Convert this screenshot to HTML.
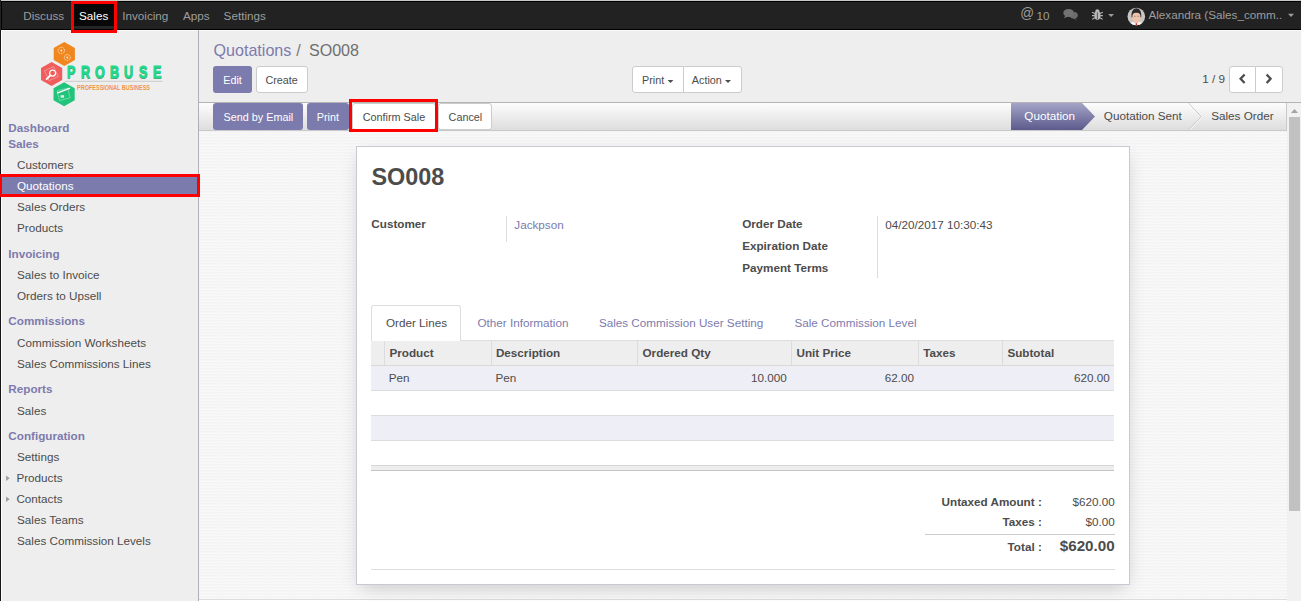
<!DOCTYPE html>
<html><head><meta charset="utf-8">
<style>
*{box-sizing:border-box}
html,body{margin:0;padding:0}
body{width:1301px;height:601px;overflow:hidden;position:relative;background:#efeded;font-family:"Liberation Sans",sans-serif;color:#4c4c4c}
.a{position:absolute}
.t{position:absolute;white-space:nowrap;line-height:1}
.btnp{position:absolute;background:#7c7bad;border-radius:3px}
.btnw{position:absolute;background:#fff;border:1px solid #ccc;border-radius:3px}
.red{position:absolute;border:3px solid #ff0000}
.tex{background:repeating-conic-gradient(#f1f1f1 0 25%,#fbfbfb 0 50%) 0 0/3px 3px}
</style></head><body>
<!-- top edge row -->
<div class="a" style="left:0;top:0;width:1301px;height:1px;background:#c8c8c8"></div>
<!-- navbar -->
<div class="a" style="left:0;top:1px;width:1301px;height:29px;background:#222;border-top:1px solid #000;border-bottom:1px solid #000"></div>
<div class="a" style="left:0;top:30px;width:1301px;height:1px;background:#fafafa"></div>
<div class="a" style="left:72px;top:2px;width:44px;height:26px;background:#080808"></div>
<div class="a" style="left:74px;top:26px;width:40px;height:2px;background:#262626"></div>
<!-- sidebar -->
<div class="a" style="left:0;top:31px;width:198px;height:570px;background:#efeeee"></div>
<div class="a" style="left:198px;top:30px;width:1px;height:571px;background:#b0afb8"></div>
<div class="a" style="left:0;top:175px;width:198px;height:21px;background:#7c7bad"></div>
<!-- control panel -->
<div class="a" style="left:199px;top:31px;width:1102px;height:71px;background:#efeeee"></div>
<div class="a" style="left:199px;top:102px;width:1102px;height:1px;background:#b4b4b4"></div>
<!-- content -->
<svg class="a" style="left:199px;top:103px" width="1088" height="496" shape-rendering="crispEdges"><defs><pattern id="ptex" x="0" y="0" width="3" height="3" patternUnits="userSpaceOnUse"><rect width="3" height="3" fill="#f6f6f6"/><rect x="1" y="0" width="1" height="1" fill="#fdfdfd"/><rect x="1" y="1" width="1" height="1" fill="#efefef"/></pattern></defs><rect width="1088" height="496" fill="url(#ptex)"/></svg>
<div class="a" style="left:199px;top:599px;width:1088px;height:1px;background:#dcdcdc"></div>
<div class="a" style="left:199px;top:600px;width:1088px;height:1px;background:#fff"></div>
<!-- scrollbar -->
<div class="a" style="left:1287px;top:103px;width:14px;height:498px;background:#f1f1f1"></div>
<svg class="a" style="left:1287px;top:103px" width="14" height="14"><path d="M4 10 L7.5 6 L11 10 Z" fill="#a3a3a3"/></svg>
<div class="a" style="left:1289px;top:117px;width:11px;height:394px;background:#c1c1c1"></div>
<!-- statusbar -->
<div class="a" style="left:199px;top:103px;width:1088px;height:28px;background:linear-gradient(#fdfdfd,#dddddd);border-bottom:1px solid #c9c9c9;border-right:1px solid #c9c9c9"></div>
<!-- left dark edge -->
<div class="a" style="left:0;top:0;width:1px;height:601px;background:#151515"></div>
<div class="a" style="left:1px;top:31px;width:1px;height:570px;background:#fbfbfb"></div>
<div class="a" style="left:1px;top:1px;width:1px;height:29px;background:#000"></div>
<div class="a" style="left:0;top:0;width:1px;height:30px;background:#232323"></div>

<!-- control panel buttons -->
<div class="btnp" style="left:213px;top:66px;width:39px;height:27px"></div>
<div class="btnw" style="left:256px;top:66px;width:52px;height:27px"></div>
<div class="btnw" style="left:632px;top:66px;width:52px;height:27px;border-radius:3px 0 0 3px"></div>
<div class="btnw" style="left:683px;top:66px;width:59px;height:27px;border-radius:0 3px 3px 0"></div>
<svg class="a" style="left:660px;top:75px" width="80" height="12">
 <path d="M7.6 5 L13.4 5 L10.5 8 Z" fill="#4c4c4c"/>
 <path d="M65 5 L71 5 L68 8 Z" fill="#4c4c4c"/>
</svg>
<div class="btnw" style="left:1229px;top:66px;width:27px;height:27px;border-radius:3px 0 0 3px"></div>
<div class="btnw" style="left:1255px;top:66px;width:28px;height:27px;border-radius:0 3px 3px 0"></div>
<svg class="a" style="left:1229px;top:66px" width="54" height="27">
 <path d="M15.6 8.5 L11.6 12.8 L15.6 17" fill="none" stroke="#4c4c4c" stroke-width="2.3"/>
 <path d="M37.6 8.5 L41.6 12.8 L37.6 17" fill="none" stroke="#4c4c4c" stroke-width="2.3"/>
</svg>

<!-- statusbar buttons -->
<div class="btnp" style="left:213px;top:103px;width:90px;height:27px"></div>
<div class="btnp" style="left:307px;top:103px;width:42px;height:27px"></div>
<div class="btnw" style="left:352px;top:103px;width:84px;height:27px"></div>
<div class="btnw" style="left:438px;top:103px;width:54px;height:27px"></div>
<!-- status arrows -->
<svg class="a" style="left:1000px;top:103px" width="287" height="27">
 <defs><linearGradient id="gq" x1="0" y1="0" x2="0" y2="1"><stop offset="0" stop-color="#a5a4c8"/><stop offset="1" stop-color="#5b5a8b"/></linearGradient></defs>
 <path d="M11 0 L82 0 L95 13.5 L82 27 L11 27 Z" fill="url(#gq)"/>
 <path d="M188.6 0 L201.3 13.5 L188.6 27" fill="none" stroke="#c8c8c8" stroke-width="1"/>
 <path d="M189.8 0 L202.5 13.5 L189.8 27" fill="none" stroke="#fafafa" stroke-width="1"/>
</svg>

<!-- sheet -->
<div class="a" style="left:356px;top:146px;width:774px;height:439px;background:#fff;border:1px solid #c9c9d6;box-shadow:0 6px 18px -5px rgba(0,0,0,0.22)"></div>
<div class="a" style="left:506px;top:216px;width:1px;height:26px;background:#dcdcdc"></div>
<div class="a" style="left:877px;top:216px;width:1px;height:62px;background:#dcdcdc"></div>
<!-- tabs -->
<div class="a" style="left:371px;top:340px;width:743px;height:1px;background:#dddddd"></div>
<div class="a" style="left:371px;top:305px;width:90px;height:36px;background:#fff;border:1px solid #dddddd;border-bottom:none;border-radius:3px 3px 0 0"></div>
<!-- table -->
<div class="a" style="left:371px;top:341px;width:743px;height:24px;background:#eeeeee"></div>
<div class="a" style="left:371px;top:365px;width:743px;height:1px;background:#d9d9d9"></div>
<div class="a" style="left:384px;top:341px;width:1px;height:24px;background:#dcdcdc"></div>
<div class="a" style="left:491px;top:341px;width:1px;height:24px;background:#dcdcdc"></div>
<div class="a" style="left:637px;top:341px;width:1px;height:24px;background:#dcdcdc"></div>
<div class="a" style="left:791px;top:341px;width:1px;height:24px;background:#dcdcdc"></div>
<div class="a" style="left:918px;top:341px;width:1px;height:24px;background:#dcdcdc"></div>
<div class="a" style="left:1002px;top:341px;width:1px;height:24px;background:#dcdcdc"></div>
<div class="a" style="left:371px;top:366px;width:743px;height:24px;background:#eeeef6"></div>
<div class="a" style="left:371px;top:390px;width:743px;height:1px;background:#dcdcdc"></div>
<div class="a" style="left:371px;top:415px;width:743px;height:1px;background:#dcdcdc"></div>
<div class="a" style="left:371px;top:416px;width:743px;height:24px;background:#eeeef6"></div>
<div class="a" style="left:371px;top:440px;width:743px;height:1px;background:#dcdcdc"></div>
<div class="a" style="left:371px;top:465px;width:743px;height:1px;background:#d5d5d5"></div>
<div class="a" style="left:371px;top:466px;width:743px;height:4px;background:#eeeeee"></div>
<div class="a" style="left:371px;top:470px;width:743px;height:1px;background:#c4c4c4"></div>
<!-- totals -->
<div class="a" style="left:925px;top:534px;width:190px;height:1px;background:#cccccc"></div>
<div class="a" style="left:371px;top:569px;width:744px;height:1px;background:#dddddd"></div>

<!-- logo -->
<svg class="a" style="left:30px;top:36px" width="140" height="76">
 <g transform="translate(34.3,18)"><path d="M0 -12 L10.6 -6 L10.6 6 L0 12 L-10.6 6 L-10.6 -6 Z" fill="#f0861d"/>
  <circle cx="-3" cy="-3.5" r="3.2" fill="none" stroke="#fff" stroke-width="1" stroke-dasharray="1.2 0.8" opacity="0.75"/>
  <circle cx="-3" cy="-3.5" r="1" fill="#fff" opacity="0.8"/>
  <circle cx="3" cy="3.5" r="3" fill="none" stroke="#fff" stroke-width="1" stroke-dasharray="1.2 0.8" opacity="0.75"/>
  <circle cx="3" cy="3.5" r="1" fill="#fff" opacity="0.8"/></g>
 <g transform="translate(21.6,38.1)"><path d="M0 -12 L10.6 -6 L10.6 6 L0 12 L-10.6 6 L-10.6 -6 Z" fill="#ef5d5d"/>
  <rect x="-5" y="-6" width="10" height="11" fill="none" stroke="#fff" stroke-width="0.6" opacity="0.5" transform="rotate(-25)"/>
  <circle cx="1" cy="-1" r="3" fill="none" stroke="#fff" stroke-width="1.2"/>
  <path d="M-1 1 L-5.5 5.5" stroke="#fff" stroke-width="1.8"/></g>
 <g transform="translate(34.1,58.2)"><path d="M0 -12 L10.6 -6 L10.6 6 L0 12 L-10.6 6 L-10.6 -6 Z" fill="#22c47a"/>
  <rect x="-6" y="-5" width="11" height="10" fill="none" stroke="#fff" stroke-width="0.6" opacity="0.5" transform="rotate(-15)"/>
  <path d="M-7 -1 L6 -6" stroke="#fff" stroke-width="1.3"/>
  <rect x="-3.5" y="1" width="3.5" height="2.5" fill="#fff" opacity="0.8"/></g>
  <path d="M35 45.3 L132.5 45.3" stroke="#cbcbcb" stroke-width="1"/>
 <text x="47" y="54" font-family="Liberation Sans" font-size="6.6" font-weight="bold" fill="#f2963e" textLength="73" lengthAdjust="spacingAndGlyphs">PROFESSIONAL BUSINESS</text>
</svg>
<div class="a" style="left:67px;top:64px;width:100px;height:18px;font-family:'Liberation Sans';font-weight:bold;font-size:16.6px;line-height:18px;color:#20da88;-webkit-text-stroke:0.9px #22d98a;text-shadow:0 1.2px 0 rgba(40,70,55,0.7)">
 <span class="a" style="left:0px;top:0;transform:scaleX(0.76);transform-origin:0 0">P</span>
 <span class="a" style="left:13.5px;top:0;transform:scaleX(0.76);transform-origin:0 0">R</span>
 <span class="a" style="left:27.5px;top:0;transform:scaleX(0.76);transform-origin:0 0">O</span>
 <span class="a" style="left:42.5px;top:0;transform:scaleX(0.76);transform-origin:0 0">B</span>
 <span class="a" style="left:56.5px;top:0;transform:scaleX(0.76);transform-origin:0 0">U</span>
 <span class="a" style="left:71.5px;top:0;transform:scaleX(0.76);transform-origin:0 0">S</span>
 <span class="a" style="left:85.5px;top:0;transform:scaleX(0.76);transform-origin:0 0">E</span>
</div>

<!-- navbar icons -->
<div class="t" style="left:1020.3px;top:7.0px;font-size:13.6px;color:#9d9d9d;transform:scaleY(1.13);transform-origin:50% 90%">@</div>
<svg class="a" style="left:1058px;top:4px" width="60" height="20">
 <ellipse cx="15.7" cy="11.3" rx="4.1" ry="3.3" fill="#6c6c6c"/>
 <path d="M16.5 13.5 L18.8 16 L14.5 14.2 Z" fill="#6c6c6c"/>
 <ellipse cx="10.6" cy="8.9" rx="5.3" ry="4.0" fill="#727272"/>
 <path d="M7.2 11.8 L5.9 14.3 L10.2 12.6 Z" fill="#727272"/>
 <ellipse cx="39.4" cy="6.9" rx="2.1" ry="1.6" fill="#b8b8b8"/>
 <ellipse cx="39.4" cy="11.5" rx="3.1" ry="4.4" fill="#b8b8b8"/>
 <path d="M34 8.3 L36.8 9.6 M44.8 8.3 L42 9.6 M34 11.6 L36.6 11.6 M44.8 11.6 L42.2 11.6 M34.2 15.4 L36.8 13.8 M44.6 15.4 L42 13.8" stroke="#b8b8b8" stroke-width="1.1"/>
 <path d="M39.4 8.4 L39.4 15.4" stroke="#4a4a5a" stroke-width="0.9"/>
 <path d="M50.2 10 L56 10 L53.1 13.1 Z" fill="#9d9d9d"/>
</svg>

<svg class="a" style="left:1126px;top:6px" width="22" height="22">
 <defs><clipPath id="cav"><circle cx="10.3" cy="10.5" r="8.7"/></clipPath></defs>
 <circle cx="10.3" cy="10.5" r="8.8" fill="#cbc6c1"/>
 <g clip-path="url(#cav)">
  <path d="M1.5 22 C2.5 17 5.5 15.8 10.4 15.8 C15.3 15.8 18.3 17 19.3 22 Z" fill="#f4f4f4"/>
  <path d="M7.5 15.6 L10.4 18.2 L13.3 15.6 Z" fill="#e8c0a8"/>
  <path d="M9.8 17.2 L11 17.2 L11.2 20 L9.6 20 Z" fill="#d42a2a"/>
  <ellipse cx="10.4" cy="11.2" rx="4.1" ry="5.2" fill="#eec3ab"/>
  <path d="M5.6 11.5 C5 5 7.5 2.2 10.4 2.2 C13.3 2.2 15.8 5 15.2 11.5 L14.5 11.2 C14.6 8.2 13.6 6.6 10.4 6.8 C7.2 6.6 6.2 8.2 6.3 11.2 Z" fill="#2a2a2a"/>
  <path d="M8.2 10.3 L9.4 10.3 M11.4 10.3 L12.6 10.3" stroke="#6b5040" stroke-width="0.7"/>
 </g>
</svg>
<svg class="a" style="left:1286px;top:10px" width="12" height="10"><path d="M2 3.8 L8 3.8 L5 7 Z" fill="#9d9d9d"/></svg>

<svg class="a" style="left:4px;top:472px" width="8" height="34"><path d="M2.1 3.4 L5.6 6.2 L2.1 9 Z" fill="#9a9a9a"/><path d="M2.1 24.4 L5.6 27.2 L2.1 30 Z" fill="#9a9a9a"/></svg>
<div class="t" id="n_discuss" style="left:23.20px;top:10.06px;font-size:11.7px;color:#9d9d9d;font-weight:normal;">Discuss</div>
<div class="t" id="n_sales" style="left:79.00px;top:10.06px;font-size:11.7px;color:#fff;font-weight:normal;">Sales</div>
<div class="t" id="n_inv" style="left:122.20px;top:10.06px;font-size:11.7px;color:#9d9d9d;font-weight:normal;">Invoicing</div>
<div class="t" id="n_apps" style="left:183.00px;top:10.06px;font-size:11.7px;color:#9d9d9d;font-weight:normal;">Apps</div>
<div class="t" id="n_settings" style="left:223.60px;top:10.06px;font-size:11.7px;color:#9d9d9d;font-weight:normal;">Settings</div>
<div class="t" id="n_10" style="left:1036.40px;top:10.36px;font-size:11.7px;color:#9d9d9d;font-weight:normal;">10</div>
<div class="t" id="n_user" style="left:1148.40px;top:8.66px;font-size:11.7px;color:#9d9d9d;font-weight:normal;">Alexandra (Sales_comm..</div>
<div class="t" id="bc_q" style="left:213.50px;top:42.21px;font-size:16.1px;color:#7c7bad;font-weight:normal;">Quotations</div>
<div class="t" id="bc_sl" style="left:296.20px;top:42.21px;font-size:16.1px;color:#777;font-weight:normal;">/</div>
<div class="t" id="bc_so" style="left:308.90px;top:42.21px;font-size:16.1px;color:#6e6e6e;font-weight:normal;">SO008</div>
<div class="t" id="pager" style="left:1202.20px;top:73.06px;font-size:11.7px;color:#4c4c4c;font-weight:normal;">1 / 9</div>
<div class="t" id="s0" style="left:8.30px;top:122.25px;font-size:11.7px;color:#7c7bad;font-weight:bold;">Dashboard</div>
<div class="t" id="s1" style="left:8.30px;top:138.25px;font-size:11.7px;color:#7c7bad;font-weight:bold;">Sales</div>
<div class="t" id="s2" style="left:17.00px;top:158.66px;font-size:11.7px;color:#4c4c4c;font-weight:normal;">Customers</div>
<div class="t" id="s3" style="left:17.00px;top:180.25px;font-size:11.7px;color:#fff;font-weight:normal;">Quotations</div>
<div class="t" id="s4" style="left:17.00px;top:200.86px;font-size:11.7px;color:#4c4c4c;font-weight:normal;">Sales Orders</div>
<div class="t" id="s5" style="left:17.00px;top:221.96px;font-size:11.7px;color:#4c4c4c;font-weight:normal;">Products</div>
<div class="t" id="s6" style="left:8.30px;top:247.95px;font-size:11.7px;color:#7c7bad;font-weight:bold;">Invoicing</div>
<div class="t" id="s7" style="left:17.00px;top:268.66px;font-size:11.7px;color:#4c4c4c;font-weight:normal;">Sales to Invoice</div>
<div class="t" id="s8" style="left:17.00px;top:289.56px;font-size:11.7px;color:#4c4c4c;font-weight:normal;">Orders to Upsell</div>
<div class="t" id="s9" style="left:8.30px;top:314.86px;font-size:11.7px;color:#7c7bad;font-weight:bold;">Commissions</div>
<div class="t" id="s10" style="left:17.00px;top:336.86px;font-size:11.7px;color:#4c4c4c;font-weight:normal;">Commission Worksheets</div>
<div class="t" id="s11" style="left:17.00px;top:358.36px;font-size:11.7px;color:#4c4c4c;font-weight:normal;">Sales Commissions Lines</div>
<div class="t" id="s12" style="left:8.30px;top:382.75px;font-size:11.7px;color:#7c7bad;font-weight:bold;">Reports</div>
<div class="t" id="s13" style="left:17.00px;top:404.66px;font-size:11.7px;color:#4c4c4c;font-weight:normal;">Sales</div>
<div class="t" id="s14" style="left:8.30px;top:430.25px;font-size:11.7px;color:#7c7bad;font-weight:bold;">Configuration</div>
<div class="t" id="s15" style="left:17.00px;top:451.06px;font-size:11.7px;color:#4c4c4c;font-weight:normal;">Settings</div>
<div class="t" id="s16" style="left:16.40px;top:471.95px;font-size:11.7px;color:#4c4c4c;font-weight:normal;">Products</div>
<div class="t" id="s17" style="left:16.40px;top:492.95px;font-size:11.7px;color:#4c4c4c;font-weight:normal;">Contacts</div>
<div class="t" id="s18" style="left:17.00px;top:513.95px;font-size:11.7px;color:#4c4c4c;font-weight:normal;">Sales Teams</div>
<div class="t" id="s19" style="left:17.00px;top:534.95px;font-size:11.7px;color:#4c4c4c;font-weight:normal;">Sales Commission Levels</div>
<div class="t" id="b_send" style="left:223.60px;top:112.12px;font-size:10.8px;color:#fff;font-weight:normal;">Send by Email</div>
<div class="t" id="b_print" style="left:316.70px;top:112.12px;font-size:10.8px;color:#fff;font-weight:normal;">Print</div>
<div class="t" id="b_confirm" style="left:362.80px;top:112.12px;font-size:10.8px;color:#4c4c4c;font-weight:normal;">Confirm Sale</div>
<div class="t" id="b_cancel" style="left:448.60px;top:112.12px;font-size:10.8px;color:#4c4c4c;font-weight:normal;">Cancel</div>
<div class="t" id="st_q" style="left:1024.30px;top:109.66px;font-size:11.7px;color:#fff;font-weight:normal;">Quotation</div>
<div class="t" id="st_qs" style="left:1103.80px;top:109.66px;font-size:11.7px;color:#4c4c4c;font-weight:normal;">Quotation Sent</div>
<div class="t" id="st_so" style="left:1211.20px;top:109.66px;font-size:11.7px;color:#4c4c4c;font-weight:normal;">Sales Order</div>
<div class="t" id="b_edit" style="left:223.20px;top:75.02px;font-size:10.8px;color:#fff;font-weight:normal;">Edit</div>
<div class="t" id="b_create" style="left:265.40px;top:75.02px;font-size:10.8px;color:#4c4c4c;font-weight:normal;">Create</div>
<div class="t" id="b_print2" style="left:642.00px;top:75.02px;font-size:10.8px;color:#4c4c4c;font-weight:normal;">Print</div>
<div class="t" id="b_action" style="left:691.80px;top:75.02px;font-size:10.8px;color:#4c4c4c;font-weight:normal;">Action</div>
<div class="t" id="h1" style="left:371.50px;top:165.61px;font-size:23.4px;color:#4c4c4c;font-weight:bold;">SO008</div>
<div class="t" id="l_cust" style="left:371.30px;top:217.56px;font-size:11.7px;color:#4c4c4c;font-weight:bold;">Customer</div>
<div class="t" id="v_cust" style="left:514.30px;top:218.75px;font-size:11.7px;color:#7c7bad;font-weight:normal;">Jackpson</div>
<div class="t" id="l_od" style="left:742.20px;top:218.06px;font-size:11.7px;color:#4c4c4c;font-weight:bold;">Order Date</div>
<div class="t" id="l_ed" style="left:742.20px;top:240.06px;font-size:11.7px;color:#4c4c4c;font-weight:bold;">Expiration Date</div>
<div class="t" id="l_pt" style="left:742.20px;top:261.86px;font-size:11.7px;color:#4c4c4c;font-weight:bold;">Payment Terms</div>
<div class="t" id="v_od" style="left:885.20px;top:218.66px;font-size:11.7px;color:#4c4c4c;font-weight:normal;">04/20/2017 10:30:43</div>
<div class="t" id="tab1" style="left:386.00px;top:316.86px;font-size:11.7px;color:#4c4c4c;font-weight:normal;">Order Lines</div>
<div class="t" id="tab2" style="left:477.50px;top:316.86px;font-size:11.7px;color:#7c7bad;font-weight:normal;">Other Information</div>
<div class="t" id="tab3" style="left:598.90px;top:316.86px;font-size:11.7px;color:#7c7bad;font-weight:normal;">Sales Commission User Setting</div>
<div class="t" id="tab4" style="left:794.40px;top:316.86px;font-size:11.7px;color:#7c7bad;font-weight:normal;">Sale Commission Level</div>
<div class="t" id="th1" style="left:389.50px;top:346.86px;font-size:11.7px;color:#4c4c4c;font-weight:bold;">Product</div>
<div class="t" id="th2" style="left:495.90px;top:346.86px;font-size:11.7px;color:#4c4c4c;font-weight:bold;">Description</div>
<div class="t" id="th3" style="left:642.50px;top:346.86px;font-size:11.7px;color:#4c4c4c;font-weight:bold;">Ordered Qty</div>
<div class="t" id="th4" style="left:796.50px;top:346.86px;font-size:11.7px;color:#4c4c4c;font-weight:bold;">Unit Price</div>
<div class="t" id="th5" style="left:923.30px;top:346.86px;font-size:11.7px;color:#4c4c4c;font-weight:bold;">Taxes</div>
<div class="t" id="th6" style="left:1007.40px;top:346.86px;font-size:11.7px;color:#4c4c4c;font-weight:bold;">Subtotal</div>
<div class="t" id="td1" style="left:388.70px;top:371.75px;font-size:11.7px;color:#4c4c4c;font-weight:normal;">Pen</div>
<div class="t" id="td2" style="left:495.50px;top:371.75px;font-size:11.7px;color:#4c4c4c;font-weight:normal;">Pen</div>
<div class="t" id="td3" style="left:786.80px;top:371.75px;font-size:11.7px;color:#4c4c4c;font-weight:normal;transform:translateX(-100%);">10.000</div>
<div class="t" id="td4" style="left:914.00px;top:371.75px;font-size:11.7px;color:#4c4c4c;font-weight:normal;transform:translateX(-100%);">62.00</div>
<div class="t" id="td5" style="left:1109.80px;top:371.75px;font-size:11.7px;color:#4c4c4c;font-weight:normal;transform:translateX(-100%);">620.00</div>
<div class="t" id="tot1l" style="left:1041.80px;top:495.56px;font-size:11.7px;color:#4c4c4c;font-weight:bold;transform:translateX(-100%);">Untaxed Amount :</div>
<div class="t" id="tot1v" style="left:1114.70px;top:495.56px;font-size:11.7px;color:#4c4c4c;font-weight:normal;transform:translateX(-100%);">$620.00</div>
<div class="t" id="tot2l" style="left:1041.80px;top:515.75px;font-size:11.7px;color:#4c4c4c;font-weight:bold;transform:translateX(-100%);">Taxes :</div>
<div class="t" id="tot2v" style="left:1114.70px;top:515.75px;font-size:11.7px;color:#4c4c4c;font-weight:normal;transform:translateX(-100%);">$0.00</div>
<div class="t" id="tot3l" style="left:1041.80px;top:540.65px;font-size:11.7px;color:#4c4c4c;font-weight:bold;transform:translateX(-100%);">Total :</div>
<div class="t" id="tot3v" style="left:1114.70px;top:537.98px;font-size:15.2px;color:#4c4c4c;font-weight:bold;transform:translateX(-100%);">$620.00</div>


<!-- red highlight boxes -->
<div class="red" style="left:71px;top:1px;width:46px;height:32px"></div>
<div class="red" style="left:-1px;top:174px;width:201px;height:23px"></div>
<div class="red" style="left:349px;top:99px;width:89px;height:33px"></div>
</body></html>
